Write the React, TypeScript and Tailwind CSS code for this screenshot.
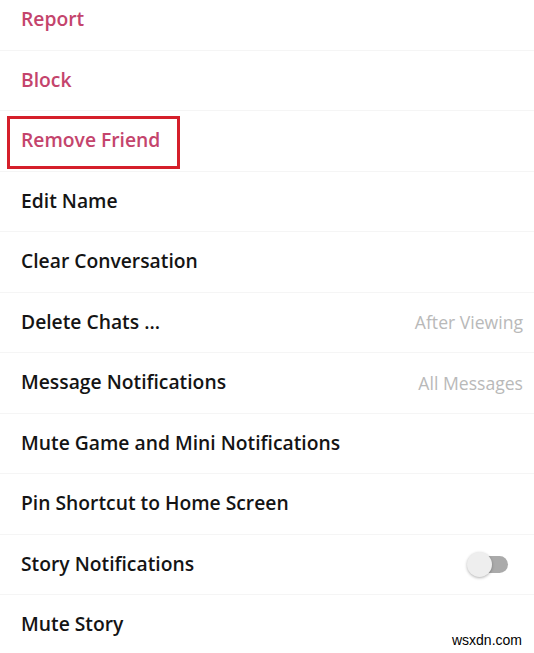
import React from "react";

type Row = {
  label: string;
  danger?: boolean;
  value?: string;
  toggle?: boolean;
  highlight?: boolean;
};

const rows: Row[] = [
  { label: "Report", danger: true },
  { label: "Block", danger: true },
  { label: "Remove Friend", danger: true, highlight: true },
  { label: "Edit Name" },
  { label: "Clear Conversation" },
  { label: "Delete Chats ...", value: "After Viewing" },
  { label: "Message Notifications", value: "All Messages" },
  { label: "Mute Game and Mini Notifications" },
  { label: "Pin Shortcut to Home Screen" },
  { label: "Story Notifications", toggle: true },
  { label: "Mute Story" },
];

export default function App() {
  return (
    <div className="relative h-[653px] w-[534px] overflow-hidden bg-white font-['Open_Sans',sans-serif]">
      <div className="-mt-[10px] flex flex-col">
        {rows.map((row) => (
          <div
            key={row.label}
            className="relative flex h-[60.5px] items-center justify-between border-b border-[#f5f5f5] pl-[21px] pr-[11px]"
          >
            <span
              className={
                row.danger
                  ? "text-[19.3px] font-semibold text-[#c4446c]"
                  : "text-[19.3px] font-semibold text-[#141414]"
              }
            >
              {row.label}
            </span>
            {row.value && (
              <span className="text-[17.6px] text-[#b9b9b9]">{row.value}</span>
            )}
            {row.toggle && (
              <div className="relative mr-[15px] h-[17px] w-[38px] rounded-full bg-[#aaaaaa]">
                <div className="absolute -left-[3px] -top-[4px] h-[25px] w-[25px] rounded-full bg-[#eeeeee] shadow-[0_1px_3px_rgba(0,0,0,0.3)]" />
              </div>
            )}
            {row.highlight && (
              <div className="absolute left-[7px] top-[5px] h-[53px] w-[173px] border-[3px] border-[#d51f2a]" />
            )}
          </div>
        ))}
      </div>
      <span className="absolute bottom-[2px] right-[12px] font-['Liberation_Sans',sans-serif] text-[14px] text-black">
        wsxdn.com
      </span>
    </div>
  );
}
